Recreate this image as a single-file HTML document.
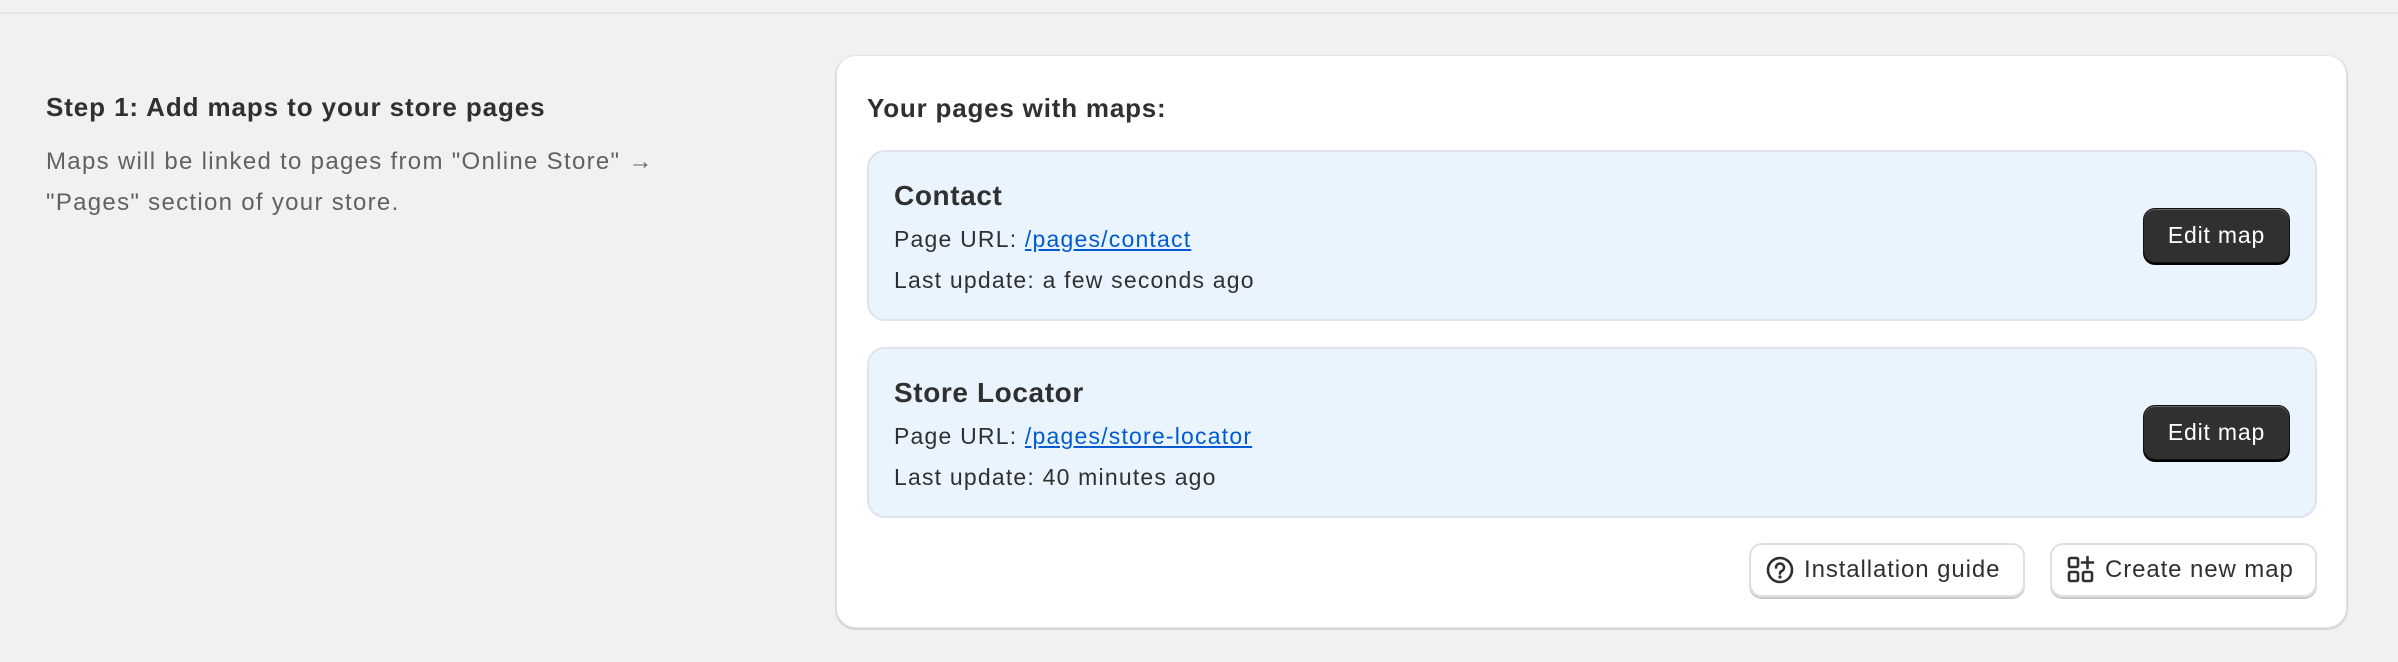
<!DOCTYPE html>
<html><head><style>
*{margin:0;padding:0;box-sizing:border-box}
body{width:2398px;height:662px;background:#f1f1f1;font-family:"Liberation Sans",Arial,sans-serif;color:#303030;position:relative;overflow:hidden}
.topline{position:absolute;left:0;top:12px;width:2398px;height:2px;background:#e6e6e6}
.h{position:absolute;left:46px;top:92px;font-size:26px;font-weight:bold;letter-spacing:0.9px}
.d{position:absolute;left:46px;top:141px;font-size:24px;line-height:41px;color:#616161;width:760px;letter-spacing:1.3px}
.card{position:absolute;left:836px;top:55px;width:1511px;height:573px;background:#fff;border-radius:20px;box-shadow:0 1px 0 1px #d4d4d4, inset 0 0 0 1px #e3e3e3}
.ct{position:absolute;left:31px;top:38px;font-size:26px;font-weight:bold;letter-spacing:0.8px}
.box{position:absolute;left:31px;width:1450px;height:171px;background:#eaf4ff;border:2px solid #dde3ea;border-radius:18px}
.box .t{position:absolute;left:25px;top:28px;font-size:28px;font-weight:bold;letter-spacing:0.6px}
.box .l1{position:absolute;left:25px;top:74px;font-size:23px;letter-spacing:1.2px}
.box .l2{position:absolute;left:25px;top:115px;font-size:23px;letter-spacing:1.2px}
.box a{color:#005bd3;text-decoration:underline}
.em{position:absolute;right:25px;top:56px;width:147px;height:55px;background:#303030;border-radius:12px;color:#fff;font-size:23px;letter-spacing:0.8px;display:flex;align-items:center;justify-content:center;box-shadow:0 2px 0 #000,inset 0 1px 0 rgba(255,255,255,.25);border:1px solid #111}
.btn{position:absolute;top:488px;height:54px;background:#fff;border-radius:13px;box-shadow:0 2px 0 #c9c9c9, inset 0 0 0 2px #e0e0e0;font-size:24px;letter-spacing:0.9px;display:flex;align-items:center;gap:9px;padding-left:16px}
</style></head><body>
<div class="topline"></div>
<div class="h">Step 1: Add maps to your store pages</div>
<div class="d">Maps will be linked to pages from "Online Store" →<br>"Pages" section of your store.</div>
<div class="card">
<div class="ct">Your pages with maps:</div>
<div class="box" style="top:95px">
<div class="t">Contact</div>
<div class="l1">Page URL: <a>/pages/contact</a></div>
<div class="l2">Last update: a few seconds ago</div>
<div class="em">Edit map</div>
</div>
<div class="box" style="top:292px">
<div class="t">Store Locator</div>
<div class="l1">Page URL: <a>/pages/store-locator</a></div>
<div class="l2">Last update: 40 minutes ago</div>
<div class="em">Edit map</div>
</div>
<div class="btn" style="left:913px;width:276px">
<svg width="30" height="30" viewBox="0 0 30 30"><circle cx="15" cy="15" r="12" fill="none" stroke="#303030" stroke-width="2.6"/><path d="M11 12.5a4 4 0 1 1 5.5 3.7c-1 .5-1.5 1.2-1.5 2.3" fill="none" stroke="#303030" stroke-width="2.6" stroke-linecap="round"/><circle cx="15" cy="22" r="1.6" fill="#303030"/></svg>
Installation guide</div>
<div class="btn" style="left:1214px;width:267px">
<svg width="30" height="30" viewBox="0 0 30 30" fill="none" stroke="#303030" stroke-width="2.6"><rect x="3" y="3" width="9" height="9" rx="1.5"/><rect x="3" y="17" width="9" height="9" rx="1.5"/><rect x="17" y="17" width="9" height="9" rx="1.5"/><path d="M21.5 2v11M16 7.5h11" stroke-linecap="round"/></svg>
Create new map</div>
</div>
</body></html>
